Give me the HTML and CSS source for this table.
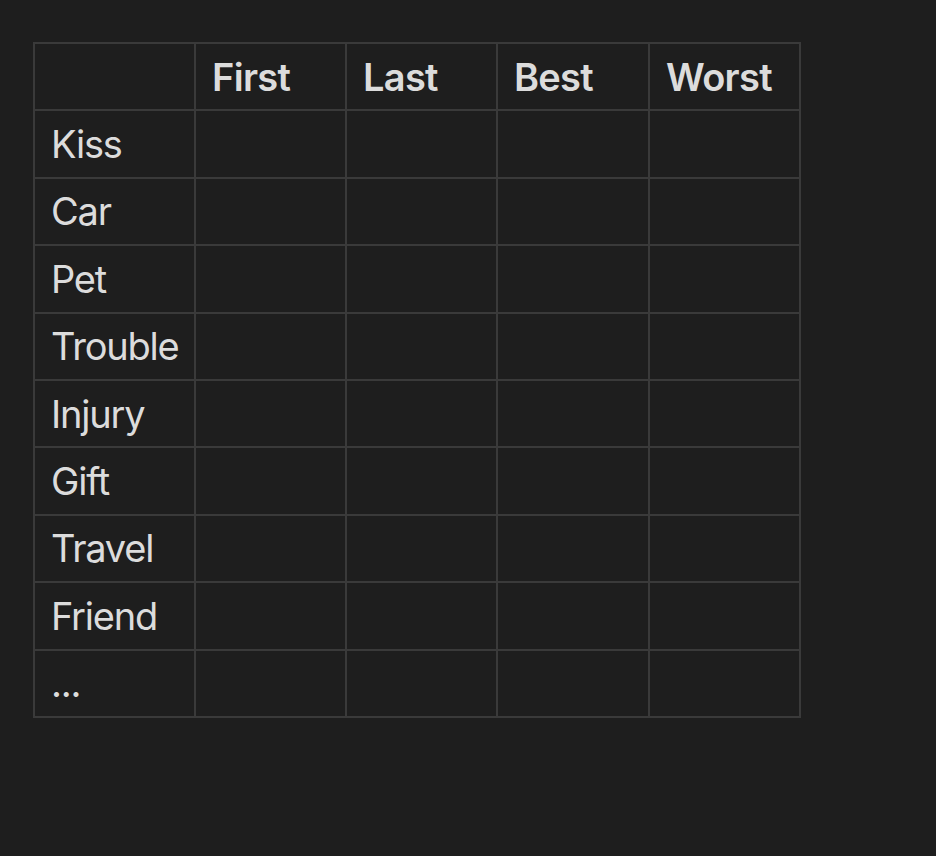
FILE: index.html
```html
<!DOCTYPE html>
<html>
<head>
<meta charset="utf-8">
<link rel="stylesheet" href="styles.css">
</head>
<body>
<div class="page">
<table class="grid">
<colgroup>
<col class="c0"><col class="c1"><col class="c2"><col class="c3"><col class="c4">
</colgroup>
<thead>
<tr><th></th><th>First</th><th>Last</th><th>Best</th><th>Worst</th></tr>
</thead>
<tbody>
<tr><td>Kiss</td><td></td><td></td><td></td><td></td></tr>
<tr><td>Car</td><td></td><td></td><td></td><td></td></tr>
<tr><td>Pet</td><td></td><td></td><td></td><td></td></tr>
<tr><td>Trouble</td><td></td><td></td><td></td><td></td></tr>
<tr><td>Injury</td><td></td><td></td><td></td><td></td></tr>
<tr><td>Gift</td><td></td><td></td><td></td><td></td></tr>
<tr><td>Travel</td><td></td><td></td><td></td><td></td></tr>
<tr><td>Friend</td><td></td><td></td><td></td><td></td></tr>
<tr><td>...</td><td></td><td></td><td></td><td></td></tr>
</tbody>
</table>
</div>
</body>
</html>
```
FILE: styles.css
```css
html, body {
  margin: 0;
  background: #1e1e1e;
}
.page {
  padding: 42px 0 0 33px;
  height: 856px;
  box-sizing: border-box;
}
.grid {
  border-collapse: collapse;
  table-layout: fixed;
  width: 768px;
  font-family: Inter, "Noto Sans", sans-serif;
  font-size: 38px;
  color: #dcdcdc;
}
.c0 { width: 161px; }
.c1 { width: 151px; }
.c2 { width: 151px; }
.c3 { width: 152px; }
.c4 { width: 151px; }
.grid th, .grid td {
  border: 2px solid #3a3a3a;
  height: 67.4px;
  box-sizing: border-box;
  padding: 0 16px;
  text-align: left;
  vertical-align: middle;
  white-space: nowrap;
  line-height: 1;
}
.grid th {
  font-weight: 600;
  letter-spacing: -0.7px;
}
.grid td {
  font-weight: 400;
  letter-spacing: -1.2px;
}
```
